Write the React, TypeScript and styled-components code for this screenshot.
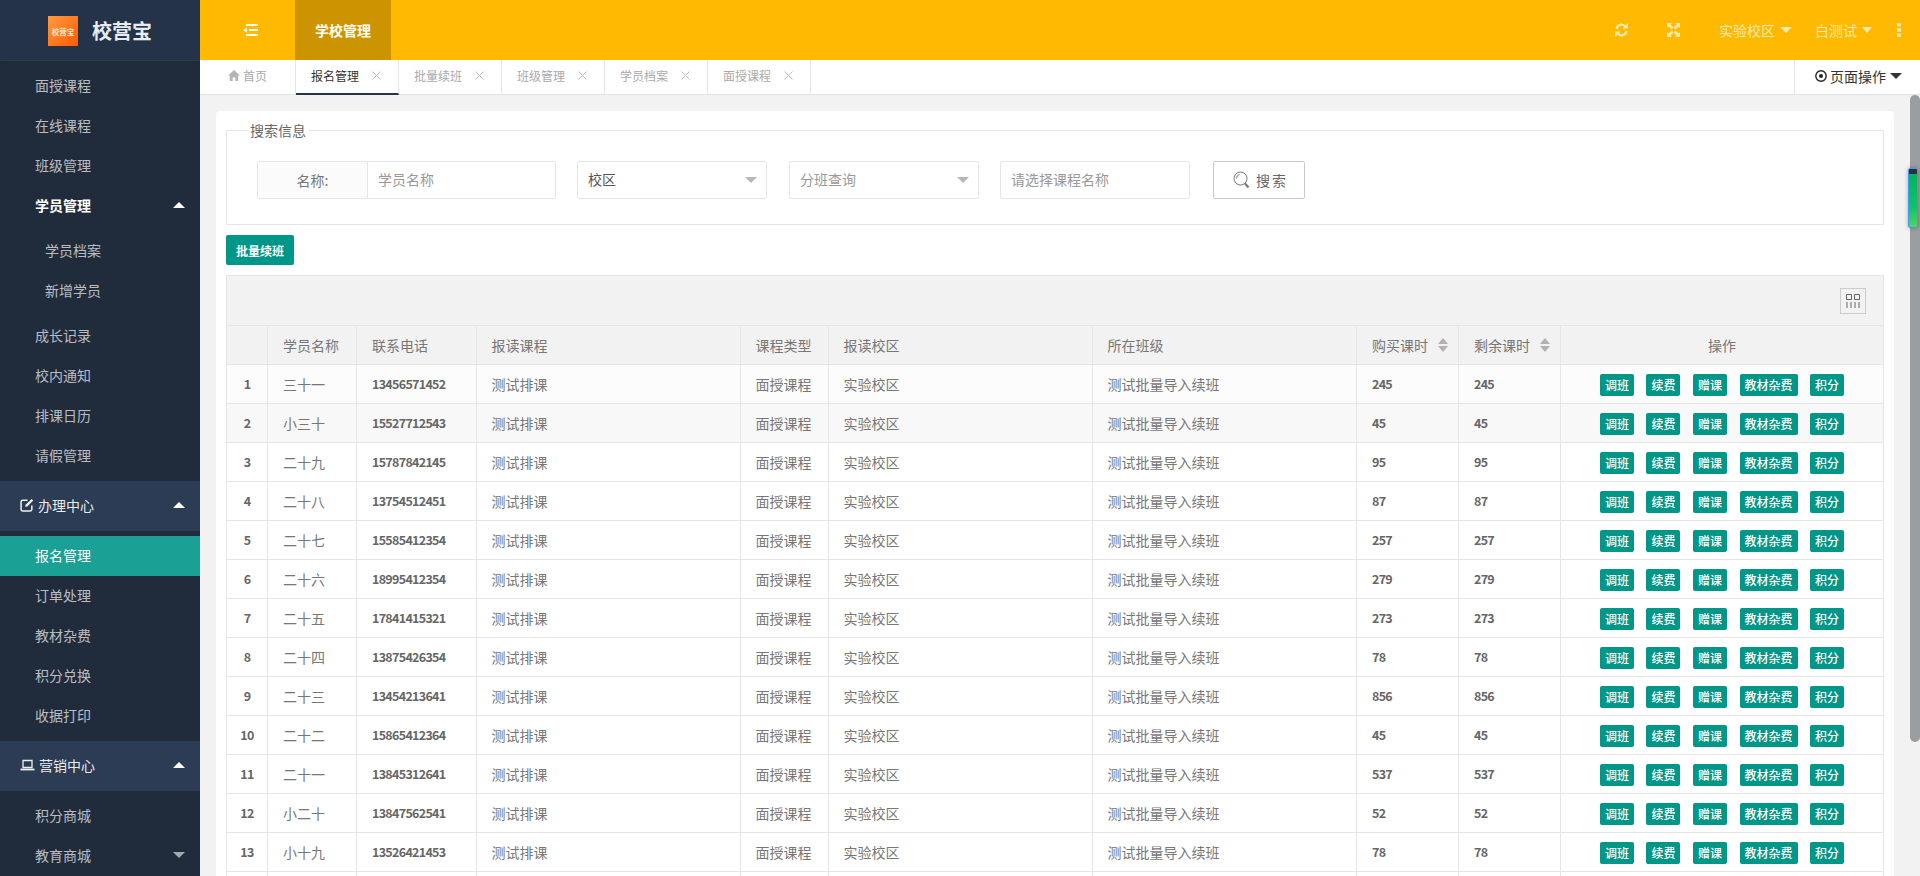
import React from 'react';
import styled, { createGlobalStyle } from 'styled-components';

const Global = createGlobalStyle`
  html, body { margin: 0; padding: 0; height: 100%; overflow: hidden; background: #f2f2f2; }
  body { font-family: "Noto Sans CJK SC", "Liberation Sans", sans-serif; font-size: 14px; color: #666; }
  #root { height: 100%; }
  * { box-sizing: border-box; }
`;

const Shell = styled.div`
  display: flex; width: 1920px; height: 876px; overflow: hidden; position: relative;
`;
const Side = styled.aside`
  width: 200px; flex: none; background: #202b3c; display: flex; flex-direction: column; overflow: hidden;
`;
const Brand = styled.div`
  height: 61px; flex: none; background: #243347; border-bottom: 1px solid #2b3a50;
  display: flex; align-items: flex-start; padding: 16px 0 0 48px; gap: 14px;
`;
const LogoBox = styled.div`
  width: 30px; height: 30px; background: linear-gradient(135deg, #ff9c3e, #ff5a00);
  color: #ffe9d6; font-size: 7.5px; font-weight: 700; display: flex; align-items: center; justify-content: center; white-space: nowrap;
`;
const BrandName = styled.div`
  color: #e8ecf2; font-size: 20px; font-weight: 700; line-height: 30px;
`;
const MenuList = styled.div`
  padding: 5px 0; flex: none; background: #202b3c; border-radius: 4px;
`;
const MenuItem = styled.div<{ $active?: boolean; $open?: boolean; $sub?: boolean }>`
  height: 40px; padding: 0 15px 2px ${p => (p.$sub ? 45 : 35)}px; flex: none;
  display: flex; justify-content: space-between; align-items: center;
  color: ${p => (p.$active || p.$open ? '#fff' : 'rgba(255,255,255,.7)')};
  font-weight: ${p => (p.$open ? 700 : 400)};
  background: ${p => (p.$active ? '#1aa094' : 'transparent')};
`;
const Group = styled.div`
  height: 50px; flex: none; background: #2c3c54; color: rgba(255,255,255,.92); padding: 0 15px 2px 20px;
  display: flex; align-items: center; justify-content: space-between;
`;
const GroupLabel = styled.span`
  display: flex; align-items: center; gap: 4px;
`;
const Caret = styled.i<{ $dir: 'up' | 'down'; $color?: string; $w?: number; $ml?: number }>`
  display: block; width: 0; height: 0; flex: none; margin-left: ${p => p.$ml ?? 0}px;
  border-left: ${p => p.$w ?? 6}px solid transparent; border-right: ${p => p.$w ?? 6}px solid transparent;
  ${p => (p.$dir === 'up' ? 'border-bottom' : 'border-top')}: 6px solid ${p => p.$color ?? '#fff'};
`;
const Body = styled.div`
  flex: 1; min-width: 0; display: flex; flex-direction: column;
`;
const Top = styled.header`
  height: 60px; flex: none; background: #ffb900; display: flex; align-items: stretch; color: #fff;
`;
const Burger = styled.div`
  width: 95px; display: flex; align-items: center; padding-left: 43px;
`;
const TopActive = styled.div`
  width: 96px; background: #cc9400; font-weight: 700; display: flex; align-items: center; justify-content: center;
`;
const TopRight = styled.div`
  margin-left: auto; display: flex; align-items: center;
`;
const TopIcon = styled.span<{ $w: number }>`
  width: ${p => p.$w}px; display: flex; color: #ffe9b0;
`;
const TopDrop = styled.span<{ $w: number }>`
  width: ${p => p.$w}px; display: flex; align-items: center; gap: 5px; color: #ffe9b0;
`;
const Tabs = styled.div`
  height: 35px; flex: none; background: #fff; border-bottom: 1px solid #e2e2e2; display: flex; position: relative;
`;
const Tab = styled.div<{ $active?: boolean; $home?: boolean }>`
  width: ${p => (p.$home ? 96 : 103)}px; height: 35px; flex: none; font-size: 12px; display: flex; align-items: center;
  padding-left: ${p => (p.$home ? 28 : 15)}px; padding-bottom: 2px; gap: 3px;
  color: ${p => (p.$active ? '#333' : '#aaa')};
  border-right: 1px solid #e6e6e6;
  border-bottom: 2px solid ${p => (p.$active ? '#253449' : 'transparent')};
`;
const TabClose = styled.svg`
  margin-left: 10px; flex: none; color: #bbb;
`;
const PageOps = styled.div`
  margin-left: auto; width: 126px; border-left: 1px solid #e6e6e6; color: #333; display: flex; align-items: center;
  gap: 3px; padding: 0 0 3px 20px;
`;
const Main = styled.main`
  flex: 1; min-height: 0; overflow: hidden; padding: 16px 26px 0 16px; background: #f2f2f2;
`;
const Card = styled.div`
  background: #fff; border-radius: 4px 4px 0 0; padding: 13px 10px 0;
`;
const Fieldset = styled.fieldset`
  margin: 0; padding: 0; height: 101px; border: 1px solid #e6e6e6; display: block; min-width: 0;
`;
const Legend = styled.legend`
  margin-left: 20px; padding: 0 3px; font-size: 14px; line-height: 13px; color: #666;
`;
const SearchRow = styled.div`
  display: flex; align-items: center; padding: 24px 0 0 30px;
`;
const Field = styled.div<{ $w: number; $mr: number }>`
  width: ${p => p.$w}px; margin-right: ${p => p.$mr}px; height: 38px; border: 1px solid #e6e6e6; border-radius: 2px; flex: none;
  display: flex; align-items: center; color: #999; background: #fff; justify-content: space-between; padding-right: 9px;
`;
const FieldLabel = styled.div`
  width: 110px; height: 100%; background: #fbfbfb; border-right: 1px solid #e6e6e6; display: flex; align-items: center; justify-content: center; color: #777; padding-bottom: 1px;
`;
const FieldText = styled.span<{ $dark?: boolean }>`
  padding: 0 0 2px 10px; margin-right: auto; color: ${p => (p.$dark ? '#555' : '#999')};
`;
const SearchBtn = styled.div`
  width: 92px; height: 38px; border: 1px solid #c9c9c9; border-radius: 2px; color: #666; display: flex; align-items: center;
  padding-left: 19px; gap: 6px; letter-spacing: 2px;
`;
const BatchBtn = styled.div`
  width: 68px; height: 30px; margin: 10px 0; background: #009688; border-radius: 2px; color: #fff; font-size: 12px; font-weight: 700;
  display: flex; align-items: center; justify-content: center;
`;
const ToolBar = styled.div`
  height: 51px; background: #f2f2f2; border: 1px solid #e6e6e6; display: flex; align-items: center; justify-content: flex-end; padding-right: 17px;
`;
const ColsBtn = styled.div`
  width: 26px; height: 26px; border: 1px solid #ccc; display: flex; align-items: center; justify-content: center;
`;
const Table = styled.div`
  border-left: 1px solid #e6e6e6; border-right: 1px solid #e6e6e6;
`;
const Row = styled.div<{ $bg?: string }>`
  display: grid; grid-template-columns: 41px 89px 119.5px 264px 88px 264px 264.5px 102px 102px 1fr;
  height: 39px; border-bottom: 1px solid #e6e6e6; background: ${p => p.$bg ?? '#fff'};
`;
const Cell = styled.div<{ $center?: boolean; $num?: boolean }>`
  border-right: 1px solid #e6e6e6; display: flex; align-items: center; padding: ${p => (p.$center ? '0 0 1px' : '0 15px 1px')};
  justify-content: ${p => (p.$center ? 'center' : 'flex-start')}; color: ${p => (p.$num ? '#666' : '#777')}; white-space: nowrap; overflow: hidden;
  font-size: ${p => (p.$num ? 12.5 : 14)}px; font-weight: ${p => (p.$num ? 700 : 400)};
  letter-spacing: ${p => (p.$num ? '-0.7px' : '0')};
  &:last-child { border-right: 0; }
`;
const Ops = styled.div`
  display: flex; justify-content: center; align-items: center; gap: 12.5px; padding-top: 2px;
`;
const OpBtn = styled.span`
  height: 22px; padding: 0 5px; background: #009688; color: #fff; border-radius: 2px; font-size: 12px; font-weight: 500; line-height: 22px; flex: none;
`;
const SortMark = styled.span`
  display: flex; flex-direction: column; gap: 2px; margin-left: 10px;
`;
const ScrollTrack = styled.div`
  position: absolute; left: 1910px; top: 95px; width: 10px; height: 647px; background: #9c9da0; border-radius: 5px;
`;
const ScrollThumb = styled.div`
  position: absolute; left: 1908px; top: 168px; width: 10px; height: 60px; border: 1px solid #3a9cf5; border-radius: 2px;
  background: linear-gradient(#2a2f3f 0 5px, #07b25c 5px, #0cc26c 65%, #55d45f);
  box-shadow: 0 0 4px rgba(0,0,0,.3);
`;

const EditIcon = () => (
  <svg width="14" height="14" viewBox="0 0 13 13" fill="none" stroke="currentColor" strokeWidth="1.4">
    <path d="M11 7v3.5a1.5 1.5 0 0 1-1.5 1.5h-7A1.5 1.5 0 0 1 1 10.500v-7A1.500 1.500 0 0 1 2.500 2H7" />
    <path d="M4.800 8.200l.4-2L10.800.9l1.500 1.500-5.500 5.400z" fill="currentColor" stroke="none" />
  </svg>
);
const LaptopIcon = () => (
  <svg width="15" height="12" viewBox="0 0 14 12" fill="none" stroke="currentColor">
    <path d="M2.500 1.500h9v7h-9z" strokeWidth="1.300" />
    <path d="M0 10.500h14" strokeWidth="1.800" />
  </svg>
);
const Shrink = () => (
  <svg width="15" height="12" viewBox="0 0 15 12" fill="#fff">
    <path d="M3 0h12v2H3zM6 5h9v2H6zM3 10h12v2H3zM4 3.500v5L0 6z" />
  </svg>
);
const Refresh = () => (
  <svg width="13" height="14" viewBox="0 0 13 14" fill="none" stroke="currentColor" strokeWidth="2.200">
    <path d="M1.500 6a5 5 0 0 1 8.800-2.500M11.500 8a5 5 0 0 1-8.800 2.500" />
    <path d="M13 0v5.500H7.500zM0 14V8.500h5.500z" fill="currentColor" stroke="none" />
  </svg>
);
const Expand = () => (
  <svg width="13" height="14" viewBox="0 0 13 14" fill="currentColor">
    <path d="M0 0h5L3.600 1.500 6.500 4.500 4.500 6.500 1.500 3.500 0 5zM13 0v5l-1.500-1.500-3 3-2-2 3-3L8 0zM0 14V9l1.500 1.500 3-3 2 2-3 3L5 14zM13 14H8l1.500-1.500-3-3 2-2 3 3L13 9z" />
  </svg>
);
const Dots = () => (
  <svg width="4" height="14" viewBox="0 0 4 14" fill="currentColor">
    <path d="M0 0h4v3.500H0zM0 5.200h4v3.500H0zM0 10.500h4V14H0z" />
  </svg>
);
const Home = () => (
  <svg width="12" height="11" viewBox="0 0 12 11" fill="#b5b5b5">
    <path d="M6 0l6 5.500h-1.700V11H7.300V7.500H4.700V11H1.700V5.500H0z" />
  </svg>
);
const CloseX = () => (
  <TabClose width="9" height="9" viewBox="0 0 9 9" fill="none" stroke="currentColor" strokeWidth="1">
    <path d="M.5.500l8 8M8.500.500l-8 8" />
  </TabClose>
);
const DotCircle = () => (
  <svg width="12" height="12" viewBox="0 0 12 12" fill="none" stroke="#222" strokeWidth="1.400">
    <circle cx="6" cy="6" r="5.200" />
    <circle cx="6" cy="6" r="2" fill="#222" stroke="none" />
  </svg>
);
const Magnifier = () => (
  <svg width="17" height="18" viewBox="0 0 17 18" fill="none" stroke="#777" strokeWidth="1">
    <circle cx="7.500" cy="7.500" r="6.500" />
    <path d="M3.500 7.500a4 4 0 0 1 3-4" />
    <path d="M12 12.500l3.500 4" strokeWidth="2" />
  </svg>
);
const ColsIcon = () => (
  <svg width="14" height="14" viewBox="0 0 14 14" fill="none" stroke="#666" strokeWidth="1">
    <path d="M.500.500h5v5h-5zM8.500.500h5v5h-5zM1 8v6M5 8v6M9 8v6M13 8v6" />
  </svg>
);

const rows: [string, string, number][] = [
  ['三十一', '13456571452', 245], ['小三十', '15527712543', 45], ['二十九', '15787842145', 95],
  ['二十八', '13754512451', 87], ['二十七', '15585412354', 257], ['二十六', '18995412354', 279],
  ['二十五', '17841415321', 273], ['二十四', '13875426354', 78], ['二十三', '13454213641', 856],
  ['二十二', '15865412364', 45], ['二十一', '13845312641', 537], ['小二十', '13847562541', 52],
  ['小十九', '13526421453', 78],
];
const opLabels = ['调班', '续费', '赠课', '教材杂费', '积分'];
const tabs = ['报名管理', '批量续班', '班级管理', '学员档案', '面授课程'];
const rowBg = (i: number) => (i === 0 ? '#fcfcfc' : i === 1 ? '#f8f8f8' : '#fff');
const emptyCells = Array.from({ length: 10 }, (_, i) => i);

const Sort = () => (
  <SortMark>
    <Caret $dir="up" $color="#b2b2b2" $w={5} />
    <Caret $dir="down" $color="#b2b2b2" $w={5} />
  </SortMark>
);

export default function App() {
  return (
    <Shell>
      <Global />
      <Side>
        <Brand>
          <LogoBox>校营宝</LogoBox>
          <BrandName>校营宝</BrandName>
        </Brand>
        <MenuList>
          <MenuItem>面授课程</MenuItem>
          <MenuItem>在线课程</MenuItem>
          <MenuItem>班级管理</MenuItem>
          <MenuItem $open>学员管理<Caret $dir="up" /></MenuItem>
          <MenuList>
            <MenuItem $sub>学员档案</MenuItem>
            <MenuItem $sub>新增学员</MenuItem>
          </MenuList>
          <MenuItem>成长记录</MenuItem>
          <MenuItem>校内通知</MenuItem>
          <MenuItem>排课日历</MenuItem>
          <MenuItem>请假管理</MenuItem>
        </MenuList>
        <Group>
          <GroupLabel><EditIcon />办理中心</GroupLabel>
          <Caret $dir="up" />
        </Group>
        <MenuList>
          <MenuItem $active>报名管理</MenuItem>
          <MenuItem>订单处理</MenuItem>
          <MenuItem>教材杂费</MenuItem>
          <MenuItem>积分兑换</MenuItem>
          <MenuItem>收据打印</MenuItem>
        </MenuList>
        <Group>
          <GroupLabel><LaptopIcon />营销中心</GroupLabel>
          <Caret $dir="up" />
        </Group>
        <MenuList>
          <MenuItem>积分商城</MenuItem>
          <MenuItem>教育商城<Caret $dir="down" $color="#a5a8ad" /></MenuItem>
        </MenuList>
      </Side>
      <Body>
        <Top>
          <Burger><Shrink /></Burger>
          <TopActive>学校管理</TopActive>
          <TopRight>
            <TopIcon $w={52}><Refresh /></TopIcon>
            <TopIcon $w={52}><Expand /></TopIcon>
            <TopDrop $w={96}>实验校区<Caret $dir="down" $color="#ffe9b0" /></TopDrop>
            <TopDrop $w={82}>白测试<Caret $dir="down" $color="#ffe9b0" $w={5} /></TopDrop>
            <TopIcon $w={23}><Dots /></TopIcon>
          </TopRight>
        </Top>
        <Tabs>
          <Tab $home><Home />首页</Tab>
          {tabs.map((t, i) => (
            <Tab key={t} $active={i === 0}>{t}<CloseX /></Tab>
          ))}
          <PageOps><DotCircle />页面操作<Caret $dir="down" $color="#333" $ml={1} /></PageOps>
        </Tabs>
        <Main>
          <Card>
            <Fieldset>
              <Legend>搜索信息</Legend>
              <SearchRow>
                <Field $w={299} $mr={21}><FieldLabel>名称:</FieldLabel><FieldText>学员名称</FieldText></Field>
                <Field $w={190} $mr={22}><FieldText $dark>校区</FieldText><Caret $dir="down" $color="#b8b8b8" /></Field>
                <Field $w={190} $mr={21}><FieldText>分班查询</FieldText><Caret $dir="down" $color="#b8b8b8" /></Field>
                <Field $w={190} $mr={23}><FieldText>请选择课程名称</FieldText></Field>
                <SearchBtn><Magnifier />搜索</SearchBtn>
              </SearchRow>
            </Fieldset>
            <BatchBtn>批量续班</BatchBtn>
            <ToolBar><ColsBtn><ColsIcon /></ColsBtn></ToolBar>
            <Table>
              <Row $bg="#f2f2f2">
                <Cell />
                <Cell>学员名称</Cell>
                <Cell>联系电话</Cell>
                <Cell>报读课程</Cell>
                <Cell>课程类型</Cell>
                <Cell>报读校区</Cell>
                <Cell>所在班级</Cell>
                <Cell>购买课时<Sort /></Cell>
                <Cell>剩余课时<Sort /></Cell>
                <Cell $center>操作</Cell>
              </Row>
              {rows.map(([name, phone, n], i) => (
                <Row key={phone} $bg={rowBg(i)}>
                  <Cell $center $num>{i + 1}</Cell>
                  <Cell>{name}</Cell>
                  <Cell $num>{phone}</Cell>
                  <Cell>测试排课</Cell>
                  <Cell>面授课程</Cell>
                  <Cell>实验校区</Cell>
                  <Cell>测试批量导入续班</Cell>
                  <Cell $num>{n}</Cell>
                  <Cell $num>{n}</Cell>
                  <Ops>{opLabels.map(l => <OpBtn key={l}>{l}</OpBtn>)}</Ops>
                </Row>
              ))}
              <Row>{emptyCells.map(i => <Cell key={i} />)}</Row>
            </Table>
          </Card>
        </Main>
      </Body>
      <ScrollTrack />
      <ScrollThumb />
    </Shell>
  );
}
